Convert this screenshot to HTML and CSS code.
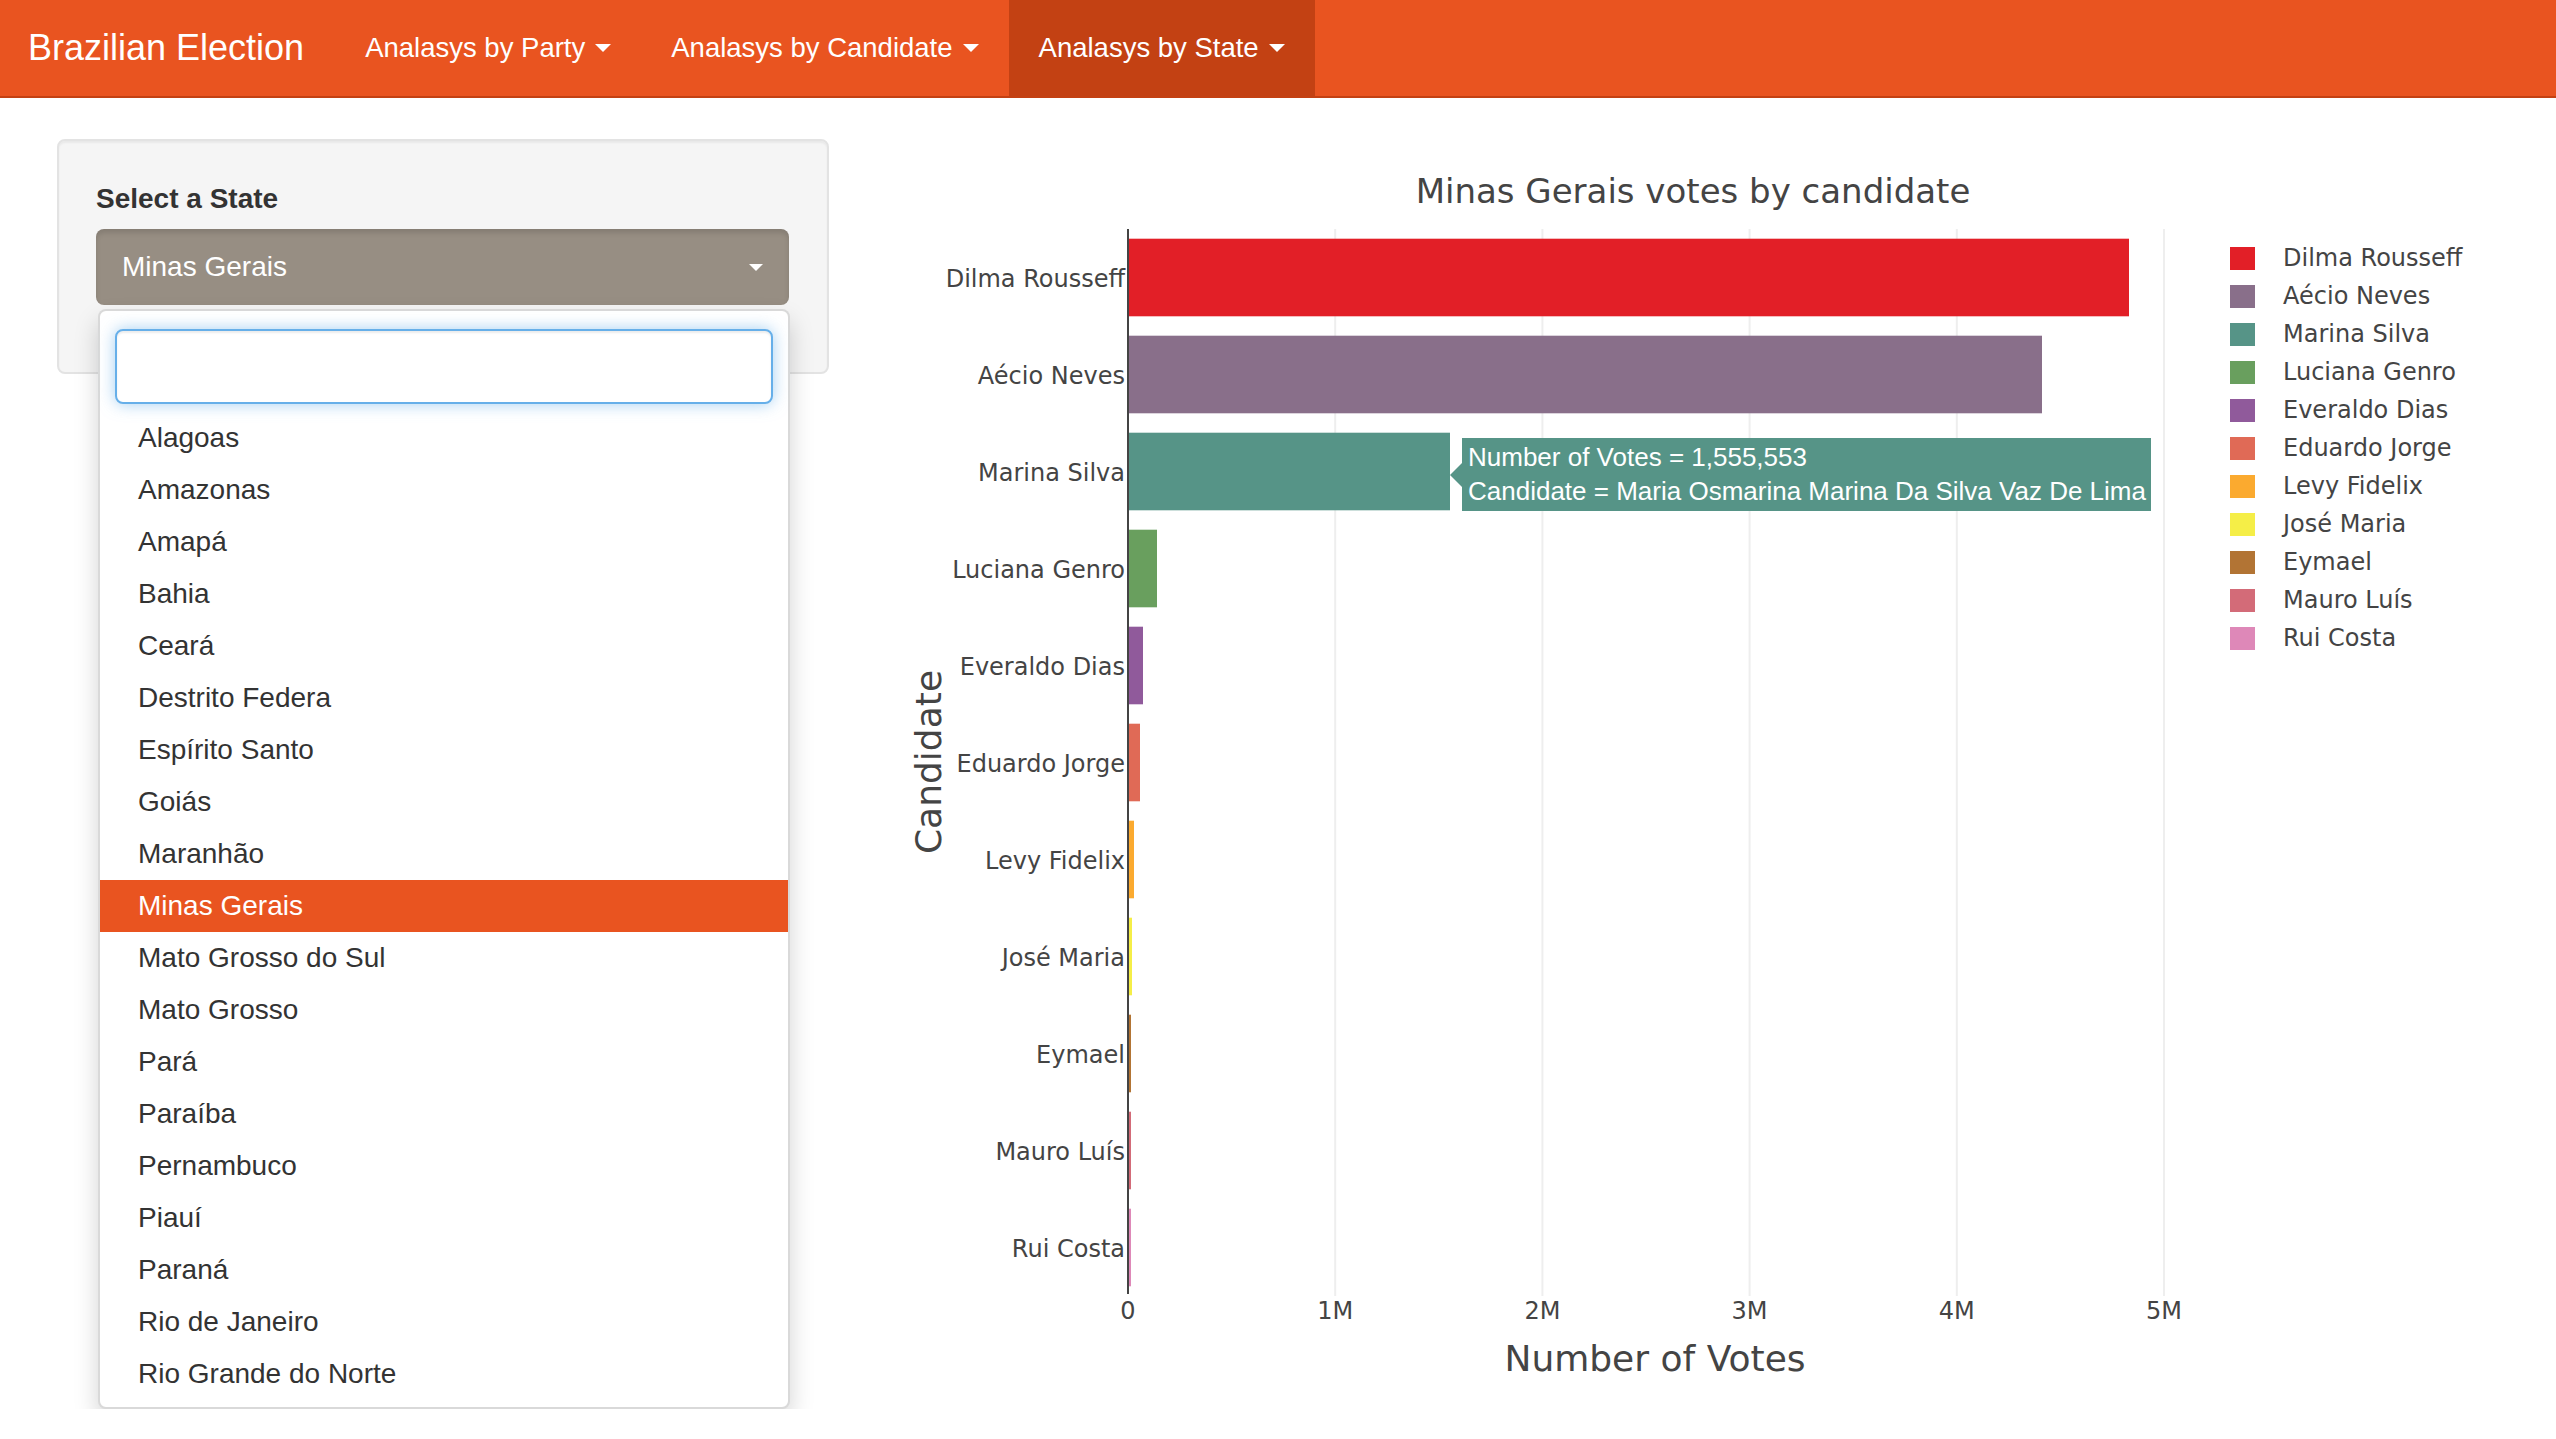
FILE: index.html
```html
<!DOCTYPE html>
<html lang="en">
<head>
<meta charset="utf-8">
<title>Brazilian Election</title>
<link rel="stylesheet" href="styles.css">
</head>
<body>
<nav class="navbar">
  <a class="brand">Brazilian Election</a>
  <ul class="nav">
    <li class="nav-item">Analasys by Party<span class="caret"></span></li>
    <li class="nav-item">Analasys by Candidate<span class="caret"></span></li>
    <li class="nav-item active">Analasys by State<span class="caret"></span></li>
  </ul>
</nav>
<main class="page">
  <aside class="sidebar">
    <div class="well">
      <label class="field-label">Select a State</label>
      <div class="select-wrap">
        <div class="select"><span class="select-value">Minas Gerais</span><span class="select-caret"></span></div>
        <div class="dropdown">
          <div class="search"><input class="search-input" type="text"></div>
          <ul class="options">
            <li class="option">Alagoas</li>
            <li class="option">Amazonas</li>
            <li class="option">Amapá</li>
            <li class="option">Bahia</li>
            <li class="option">Ceará</li>
            <li class="option">Destrito Federa</li>
            <li class="option">Espírito Santo</li>
            <li class="option">Goiás</li>
            <li class="option">Maranhão</li>
            <li class="option selected">Minas Gerais</li>
            <li class="option">Mato Grosso do Sul</li>
            <li class="option">Mato Grosso</li>
            <li class="option">Pará</li>
            <li class="option">Paraíba</li>
            <li class="option">Pernambuco</li>
            <li class="option">Piauí</li>
            <li class="option">Paraná</li>
            <li class="option">Rio de Janeiro</li>
            <li class="option">Rio Grande do Norte</li>
          </ul>
        </div>
      </div>
    </div>
  </aside>
  <section class="chart">
    <svg class="plot" width="1320" height="1270" viewBox="0 0 1320 1270">
      <text class="plot-title" x="813" y="64" text-anchor="middle">Minas Gerais votes by candidate</text>
      <g class="grid">
        <line x1="455.2" y1="90" x2="455.2" y2="1157"/>
        <line x1="662.4" y1="90" x2="662.4" y2="1157"/>
        <line x1="869.6" y1="90" x2="869.6" y2="1157"/>
        <line x1="1076.8" y1="90" x2="1076.8" y2="1157"/>
        <line x1="1284" y1="90" x2="1284" y2="1157"/>
      </g>
      <g class="bars">
        <rect x="248" y="99.7" width="1001" height="77.6" fill="#e21f27"/>
        <rect x="248" y="196.7" width="914" height="77.6" fill="#896f8a"/>
        <rect x="248" y="293.7" width="322" height="77.6" fill="#569487"/>
        <rect x="248" y="390.7" width="29" height="77.6" fill="#699f5e"/>
        <rect x="248" y="487.7" width="15" height="77.6" fill="#905a9b"/>
        <rect x="248" y="584.7" width="12" height="77.6" fill="#e06a56"/>
        <rect x="248" y="681.7" width="6" height="77.6" fill="#fbaa2f"/>
        <rect x="248" y="778.7" width="4" height="77.6" fill="#f5ee47"/>
        <rect x="248" y="875.7" width="3" height="77.6" fill="#b27434"/>
        <rect x="248" y="972.7" width="3" height="77.6" fill="#d36b78"/>
        <rect x="248" y="1069.7" width="3" height="77.6" fill="#de88b8"/>
      </g>
      <line class="axis-line" x1="248" y1="90" x2="248" y2="1155"/>
      <g class="cat-labels" text-anchor="end">
        <text x="245" y="147.5">Dilma Rousseff</text>
        <text x="245" y="244.5">Aécio Neves</text>
        <text x="245" y="341.5">Marina Silva</text>
        <text x="245" y="438.5">Luciana Genro</text>
        <text x="245" y="535.5">Everaldo Dias</text>
        <text x="245" y="632.5">Eduardo Jorge</text>
        <text x="245" y="729.5">Levy Fidelix</text>
        <text x="245" y="826.5">José Maria</text>
        <text x="245" y="923.5">Eymael</text>
        <text x="245" y="1020.5">Mauro Luís</text>
        <text x="245" y="1117.5">Rui Costa</text>
      </g>
      <g class="tick-labels" text-anchor="middle">
        <text x="248" y="1180">0</text>
        <text x="455.2" y="1180">1M</text>
        <text x="662.4" y="1180">2M</text>
        <text x="869.6" y="1180">3M</text>
        <text x="1076.8" y="1180">4M</text>
        <text x="1284" y="1180">5M</text>
      </g>
      <text class="axis-title" x="775" y="1232" text-anchor="middle">Number of Votes</text>
      <text class="axis-title" transform="translate(61,623) rotate(-90)" text-anchor="middle">Candidate</text>
    </svg>
    <ul class="legend">
      <li class="legend-item"><span class="swatch" style="background:#e21f27"></span>Dilma Rousseff</li>
      <li class="legend-item"><span class="swatch" style="background:#896f8a"></span>Aécio Neves</li>
      <li class="legend-item"><span class="swatch" style="background:#569487"></span>Marina Silva</li>
      <li class="legend-item"><span class="swatch" style="background:#699f5e"></span>Luciana Genro</li>
      <li class="legend-item"><span class="swatch" style="background:#905a9b"></span>Everaldo Dias</li>
      <li class="legend-item"><span class="swatch" style="background:#e06a56"></span>Eduardo Jorge</li>
      <li class="legend-item"><span class="swatch" style="background:#fbaa2f"></span>Levy Fidelix</li>
      <li class="legend-item"><span class="swatch" style="background:#f5ee47"></span>José Maria</li>
      <li class="legend-item"><span class="swatch" style="background:#b27434"></span>Eymael</li>
      <li class="legend-item"><span class="swatch" style="background:#d36b78"></span>Mauro Luís</li>
      <li class="legend-item"><span class="swatch" style="background:#de88b8"></span>Rui Costa</li>
    </ul>
    <div class="tooltip">
      <span class="tooltip-arrow"></span>
      <div class="tooltip-box">
        <div class="tooltip-line">Number of Votes = 1,555,553</div>
        <div class="tooltip-line">Candidate = Maria Osmarina Marina Da Silva Vaz De Lima</div>
      </div>
    </div>
  </section>
</main>
</body>
</html>
```
FILE: styles.css
```css
* { box-sizing: border-box; }

body {
  margin: 0;
  background: #fff;
  color: #333;
  font-family: "Liberation Sans", Arial, sans-serif;
}

/* ---------- navbar ---------- */
.navbar {
  display: flex;
  align-items: stretch;
  height: 98px;
  background: #e95420;
  border-bottom: 2px solid #c34113;
}
.brand {
  display: flex;
  align-items: center;
  padding: 0 31px 0 28px;
  font-size: 36px;
  color: #fff;
}
.nav {
  display: flex;
  margin: 0;
  padding: 0;
  list-style: none;
}
.nav-item {
  display: flex;
  align-items: center;
  padding: 0 30px;
  font-size: 27.5px;
  color: #fff;
}
.nav-item.active { background: #c34113; }
.caret {
  width: 0;
  height: 0;
  margin-left: 10px;
  border-left: 8px solid transparent;
  border-right: 8px solid transparent;
  border-top: 8px solid #fff;
}

/* ---------- page ---------- */
.page {
  display: flex;
  align-items: flex-start;
  padding: 41px 0 0 57px;
  gap: 51px;
}
.sidebar { width: 772px; flex: none; }

.well {
  background: #f5f5f5;
  border: 2px solid #e3e3e3;
  border-radius: 8px;
  box-shadow: inset 0 2px 2px rgba(0,0,0,.05);
  padding: 38px 38px 67px 37px;
}
.field-label {
  display: block;
  font-size: 28px;
  font-weight: bold;
  line-height: 40px;
  margin-bottom: 10px;
  color: #333;
}
.select-wrap { position: relative; }
.select {
  display: flex;
  align-items: center;
  justify-content: space-between;
  height: 76px;
  padding: 0 26px 0 26px;
  background: #978e83;
  border-radius: 8px;
  box-shadow: inset 0 4px 5px rgba(0,0,0,.12);
  color: #fff;
  font-size: 28px;
}
.select-caret {
  width: 0;
  height: 0;
  border-left: 7px solid transparent;
  border-right: 7px solid transparent;
  border-top: 7px solid #fff;
}

.dropdown {
  position: absolute;
  top: 80px;
  left: 2px;
  width: 692px;
  background: #fff;
  border: 2px solid rgba(0,0,0,.15);
  border-radius: 8px;
  box-shadow: 0 12px 24px rgba(0,0,0,.175);
  padding: 18px 0 7px;
  z-index: 5;
}
.search { padding: 0 15px 8px; }
.search-input {
  display: block;
  width: 100%;
  height: 75px;
  border: 2px solid #66afe9;
  border-radius: 8px;
  outline: none;
  background: #fff;
  box-shadow: inset 0 2px 2px rgba(0,0,0,.075), 0 0 16px rgba(102,175,233,.6);
  font: 28px "Liberation Sans", Arial, sans-serif;
}
.options {
  list-style: none;
  margin: 0;
  padding: 0;
}
.option {
  height: 52px;
  line-height: 52px;
  padding-left: 38px;
  font-size: 28px;
  color: #333;
}
.option.selected {
  background: #e95420;
  color: #fff;
}

/* ---------- chart ---------- */
.chart {
  position: relative;
  display: flex;
  align-items: flex-start;
  width: 1676px;
  flex: none;
}
.plot { display: block; flex: none; }
.plot text {
  font-family: "DejaVu Sans", Verdana, sans-serif;
  fill: #444;
}
.plot-title { font-size: 34px; }
.grid line { stroke: #eee; stroke-width: 2; }
.axis-line { stroke: #444; stroke-width: 2; }
.cat-labels text, .tick-labels text { font-size: 24px; }
.plot .axis-title { font-size: 36px; }

.legend {
  list-style: none;
  margin: 0;
  padding: 100px 0 0 30px;
}
.legend-item {
  display: flex;
  align-items: center;
  height: 38px;
  font-family: "DejaVu Sans", Verdana, sans-serif;
  font-size: 24px;
  color: #444;
  white-space: nowrap;
}
.swatch {
  width: 25px;
  height: 23px;
  margin-right: 28px;
  flex: none;
}

.tooltip {
  position: absolute;
  left: 570px;
  top: 299px;
  display: flex;
  align-items: center;
}
.tooltip-arrow {
  width: 0;
  height: 0;
  border-top: 12px solid transparent;
  border-bottom: 12px solid transparent;
  border-right: 12px solid #569487;
}
.tooltip-box {
  background: #569487;
  color: #fff;
  padding: 2px 5px 3px 6px;
  font-family: "Liberation Sans", Arial, sans-serif;
  font-size: 26px;
  line-height: 34px;
  white-space: nowrap;
}
```
